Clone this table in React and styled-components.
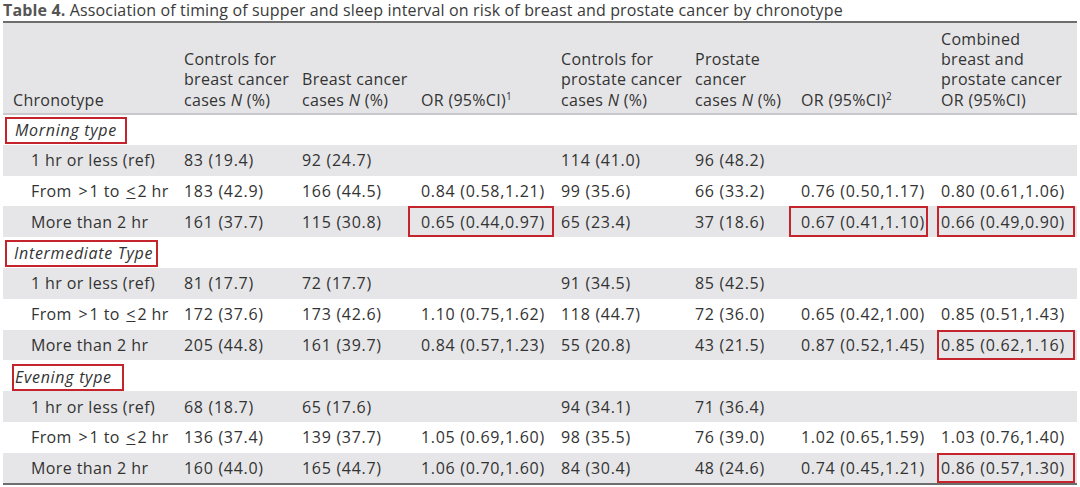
import React from 'react';
import styled, { createGlobalStyle } from 'styled-components';

const GlobalStyle = createGlobalStyle`
  html, body {
    margin: 0;
    padding: 0;
    background: #ffffff;
  }
  body {
    font-family: 'Open Sans', 'DejaVu Sans', sans-serif;
    color: #333;
  }
`;

const Page = styled.div`
  width: 1080px;
  height: 487px;
  overflow: hidden;
`;

const Caption = styled.div`
  height: 21px;
  font-size: 16px;
  letter-spacing: 0.15px;
  line-height: 20px;
  color: #3a3a3a;
  border-bottom: 2px solid #6e6e6e;
  margin-right: 3px;
  margin-left: 3px;
  white-space: nowrap;
  b {
    font-weight: 700;
    color: #555;
  }
`;

const Table = styled.table`
  margin-left: 3px;
  width: 1074px;
  border-collapse: collapse;
  table-layout: fixed;
  font-size: 16px;
  letter-spacing: 0.3px;
  border-bottom: 2px solid #6e6e6e;
`;

const HeadRow = styled.tr`
  background: #e5e5e7;
  border-bottom: 2px solid #c9c9cc;
`;

const Th = styled.th`
  height: 87px;
  padding: 0 0 3px 10px;
  text-align: left;
  vertical-align: bottom;
  font-weight: 400;
  line-height: 20.3px;
  color: #333;
  white-space: nowrap;
  sup {
    font-size: 10px;
    vertical-align: 6px;
    line-height: 0;
  }
`;

const Row = styled.tr`
  height: 30.8px;
  background: ${({ $shade }) => ($shade ? '#e6e6e8' : '#ffffff')};
`;

const Td = styled.td`
  padding: 0 0 0 ${({ $indent }) => ($indent ? '28px' : '10px')};
  white-space: nowrap;
  line-height: 20px;
  color: #333;
  position: relative;
  letter-spacing: ${({ $num }) => ($num ? '0.7px' : '0.4px')};
`;

const GroupLabel = styled.span`
  display: inline-block;
  font-style: italic;
  letter-spacing: 0.7px;
  margin-left: ${({ $left }) => $left}px;
  margin-top: ${({ $top }) => $top}px;
  vertical-align: top;
  padding: 1px ${({ $right }) => $right}px 2px ${({ $pad }) => $pad}px;
  border: 2px solid #c4242c;
`;

const Marked = styled.span`
  position: absolute;
  top: 0;
  bottom: 0;
  left: ${({ $left }) => $left}px;
  right: ${({ $right }) => $right}px;
  border: 2px solid #c4242c;
  pointer-events: none;
`;

const Le = styled.span`
  text-decoration: underline;
  text-underline-offset: 1px;
`;

const Gap = styled.span`
  letter-spacing: 0;
  margin: 0 2px;
`;

const widths = [171, 118, 119, 140, 134, 106, 140, 146];

const groups = [
  {
    name: 'Morning type',
    box: { left: -8, pad: 8, right: 8, top: 1 },
    rows: [
      ['1 hr or less (ref)', '83 (19.4)', '92 (24.7)', '', '114 (41.0)', '96 (48.2)', '', ''],
      ['gt', '183 (42.9)', '166 (44.5)', '0.84 (0.58,1.21)', '99 (35.6)', '66 (33.2)', '0.76 (0.50,1.17)', '0.80 (0.61,1.06)'],
      ['More than 2 hr', '161 (37.7)', '115 (30.8)', '0.65 (0.44,0.97)', '65 (23.4)', '37 (18.6)', '0.67 (0.41,1.10)', '0.66 (0.49,0.90)'],
    ],
    marks: { 2: [3, 6, 7] },
  },
  {
    name: 'Intermediate Type',
    box: { left: -8, pad: 7, right: 3, top: 1 },
    rows: [
      ['1 hr or less (ref)', '81 (17.7)', '72 (17.7)', '', '91 (34.5)', '85 (42.5)', '', ''],
      ['gt', '172 (37.6)', '173 (42.6)', '1.10 (0.75,1.62)', '118 (44.7)', '72 (36.0)', '0.65 (0.42,1.00)', '0.85 (0.51,1.43)'],
      ['More than 2 hr', '205 (44.8)', '161 (39.7)', '0.84 (0.57,1.23)', '55 (20.8)', '43 (21.5)', '0.87 (0.52,1.45)', '0.85 (0.62,1.16)'],
    ],
    marks: { 2: [7] },
  },
  {
    name: 'Evening type',
    box: { left: -1, pad: 1, right: 10, top: 3 },
    rows: [
      ['1 hr or less (ref)', '68 (18.7)', '65 (17.6)', '', '94 (34.1)', '71 (36.4)', '', ''],
      ['gt', '136 (37.4)', '139 (37.7)', '1.05 (0.69,1.60)', '98 (35.5)', '76 (39.0)', '1.02 (0.65,1.59)', '1.03 (0.76,1.40)'],
      ['More than 2 hr', '160 (44.0)', '165 (44.7)', '1.06 (0.70,1.60)', '84 (30.4)', '48 (24.6)', '0.74 (0.45,1.21)', '0.86 (0.57,1.30)'],
    ],
    marks: { 2: [7] },
  },
];

// where each red box sits relative to its cell
const markSpots = {
  3: { left: -3, right: -3 },
  6: { left: -2, right: 3 },
  7: { left: 6, right: 2 },
};

const FromLabel = () => (
  <>
    From <Gap>&gt;</Gap>1 to <Gap><Le>&lt;</Le></Gap>2 hr
  </>
);

const App = () => {
  let shade = false;
  return (
    <Page>
      <GlobalStyle />
      <Caption>
        <b>Table 4.</b> Association of timing of supper and sleep interval on risk of breast and prostate cancer by
        chronotype
      </Caption>
      <Table>
        <colgroup>
          {widths.map((w, i) => (
            <col key={i} style={{ width: w }} />
          ))}
        </colgroup>
        <thead>
          <HeadRow>
            <Th>Chronotype</Th>
            <Th>
              Controls for
              <br />
              breast cancer
              <br />
              cases <i>N</i> (%)
            </Th>
            <Th>
              Breast cancer
              <br />
              cases <i>N</i> (%)
            </Th>
            <Th>
              OR (95%CI)<sup>1</sup>
            </Th>
            <Th>
              Controls for
              <br />
              prostate cancer
              <br />
              cases <i>N</i> (%)
            </Th>
            <Th>
              Prostate
              <br />
              cancer
              <br />
              cases <i>N</i> (%)
            </Th>
            <Th>
              OR (95%CI)<sup>2</sup>
            </Th>
            <Th>
              Combined
              <br />
              breast and
              <br />
              prostate cancer
              <br />
              OR (95%CI)
            </Th>
          </HeadRow>
        </thead>
        <tbody>
          {groups.map((g) => {
            shade = false;
            return (
              <React.Fragment key={g.name}>
                <Row>
                  <Td colSpan={8}>
                    <GroupLabel $left={g.box.left} $pad={g.box.pad} $right={g.box.right} $top={g.box.top}>
                      {g.name}
                    </GroupLabel>
                  </Td>
                </Row>
                {g.rows.map((r, ri) => {
                  shade = !shade;
                  const marked = g.marks[ri] || [];
                  return (
                    <Row key={ri} $shade={shade}>
                      {r.map((c, ci) => (
                        <Td key={ci} $indent={ci === 0} $num={ci > 0}>
                          {ci === 0 && c === 'gt' ? <FromLabel /> : c}
                          {marked.includes(ci) && (
                            <Marked $left={markSpots[ci].left} $right={markSpots[ci].right} />
                          )}
                        </Td>
                      ))}
                    </Row>
                  );
                })}
              </React.Fragment>
            );
          })}
        </tbody>
      </Table>
    </Page>
  );
};

export default App;
